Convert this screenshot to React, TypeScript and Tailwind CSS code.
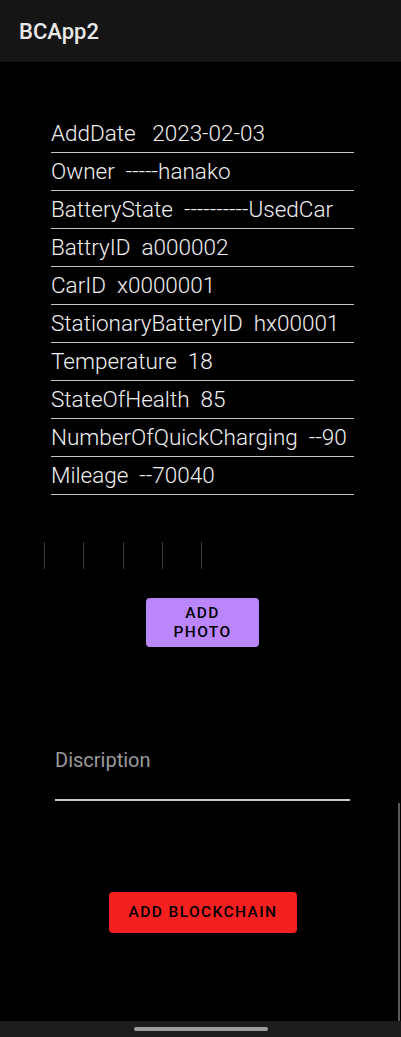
import React from 'react';

const rows: [string, string][] = [
  ['AddDate', '  2023-02-03'],
  ['Owner', ' -----hanako'],
  ['BatteryState', ' ----------UsedCar'],
  ['BattryID', ' a000002'],
  ['CarID', ' x0000001'],
  ['StationaryBatteryID', ' hx00001'],
  ['Temperature', ' 18'],
  ['StateOfHealth', ' 85'],
  ['NumberOfQuickCharging', ' --90'],
  ['Mileage', ' --70040'],
];

const App: React.FC = () => {
  return (
    <div className="flex flex-col w-[401px] h-[1037px] bg-black text-white overflow-hidden" style={{ fontFamily: 'Roboto, "Noto Sans", sans-serif' }}>
      {/* app bar */}
      <header className="h-[62px] bg-[#151515] flex items-center pl-[19px] shrink-0">
        <h1 className="text-[22px] font-medium text-[#e8e8e8]">BCApp2</h1>
      </header>

      <main className="relative flex-1 flex flex-col">
        <div className="ml-[51px] w-[303px] mt-[53px] flex flex-col">
          {rows.map(([k, v]) => (
            <div key={k} className="h-[38px] flex items-center border-b border-[#c4c4c4] text-[22.5px] font-light text-[#f0f0f0] whitespace-pre">
              {k} {v}
            </div>
          ))}
        </div>

        {/* empty photo slots */}
        <div className="mt-[47px] ml-[44px] flex gap-[38.3px] h-[27px]">
          {[0, 1, 2, 3, 4].map((i) => (
            <div key={i} className="w-px h-full bg-[#3a3a3a]" />
          ))}
        </div>

        <button className="mt-[29px] ml-[146px] w-[113px] h-[49px] rounded bg-[#bb86fc] text-black text-[15.5px] font-medium tracking-[1.4px] leading-[19px] flex items-center justify-center">
          ADD
          <br />
          PHOTO
        </button>

        <div className="mt-[100px] ml-[55px] w-[295px] border-b-2 border-[#c8c8c8] pb-[26px]">
          <span className="block text-[20px] leading-[26px] text-[#9a9a9a]">Discription</span>
        </div>

        <button className="mt-[91px] ml-[109px] w-[188px] h-[41px] rounded bg-[#f41f1f] text-black text-[15.5px] font-medium tracking-[1.4px]">
          ADD BLOCKCHAIN
        </button>

        {/* scroll indicator */}
        <div className="absolute right-[1px] bottom-0 w-[2px] h-[218px] bg-[#5a5a5a]" />
      </main>

      <footer className="h-[16px] bg-[#1c1c1c] flex justify-center pt-[6px] shrink-0">
        <div className="w-[134px] h-[4px] rounded-full bg-[#9b9b9b]" />
      </footer>
    </div>
  );
};

export default App;
